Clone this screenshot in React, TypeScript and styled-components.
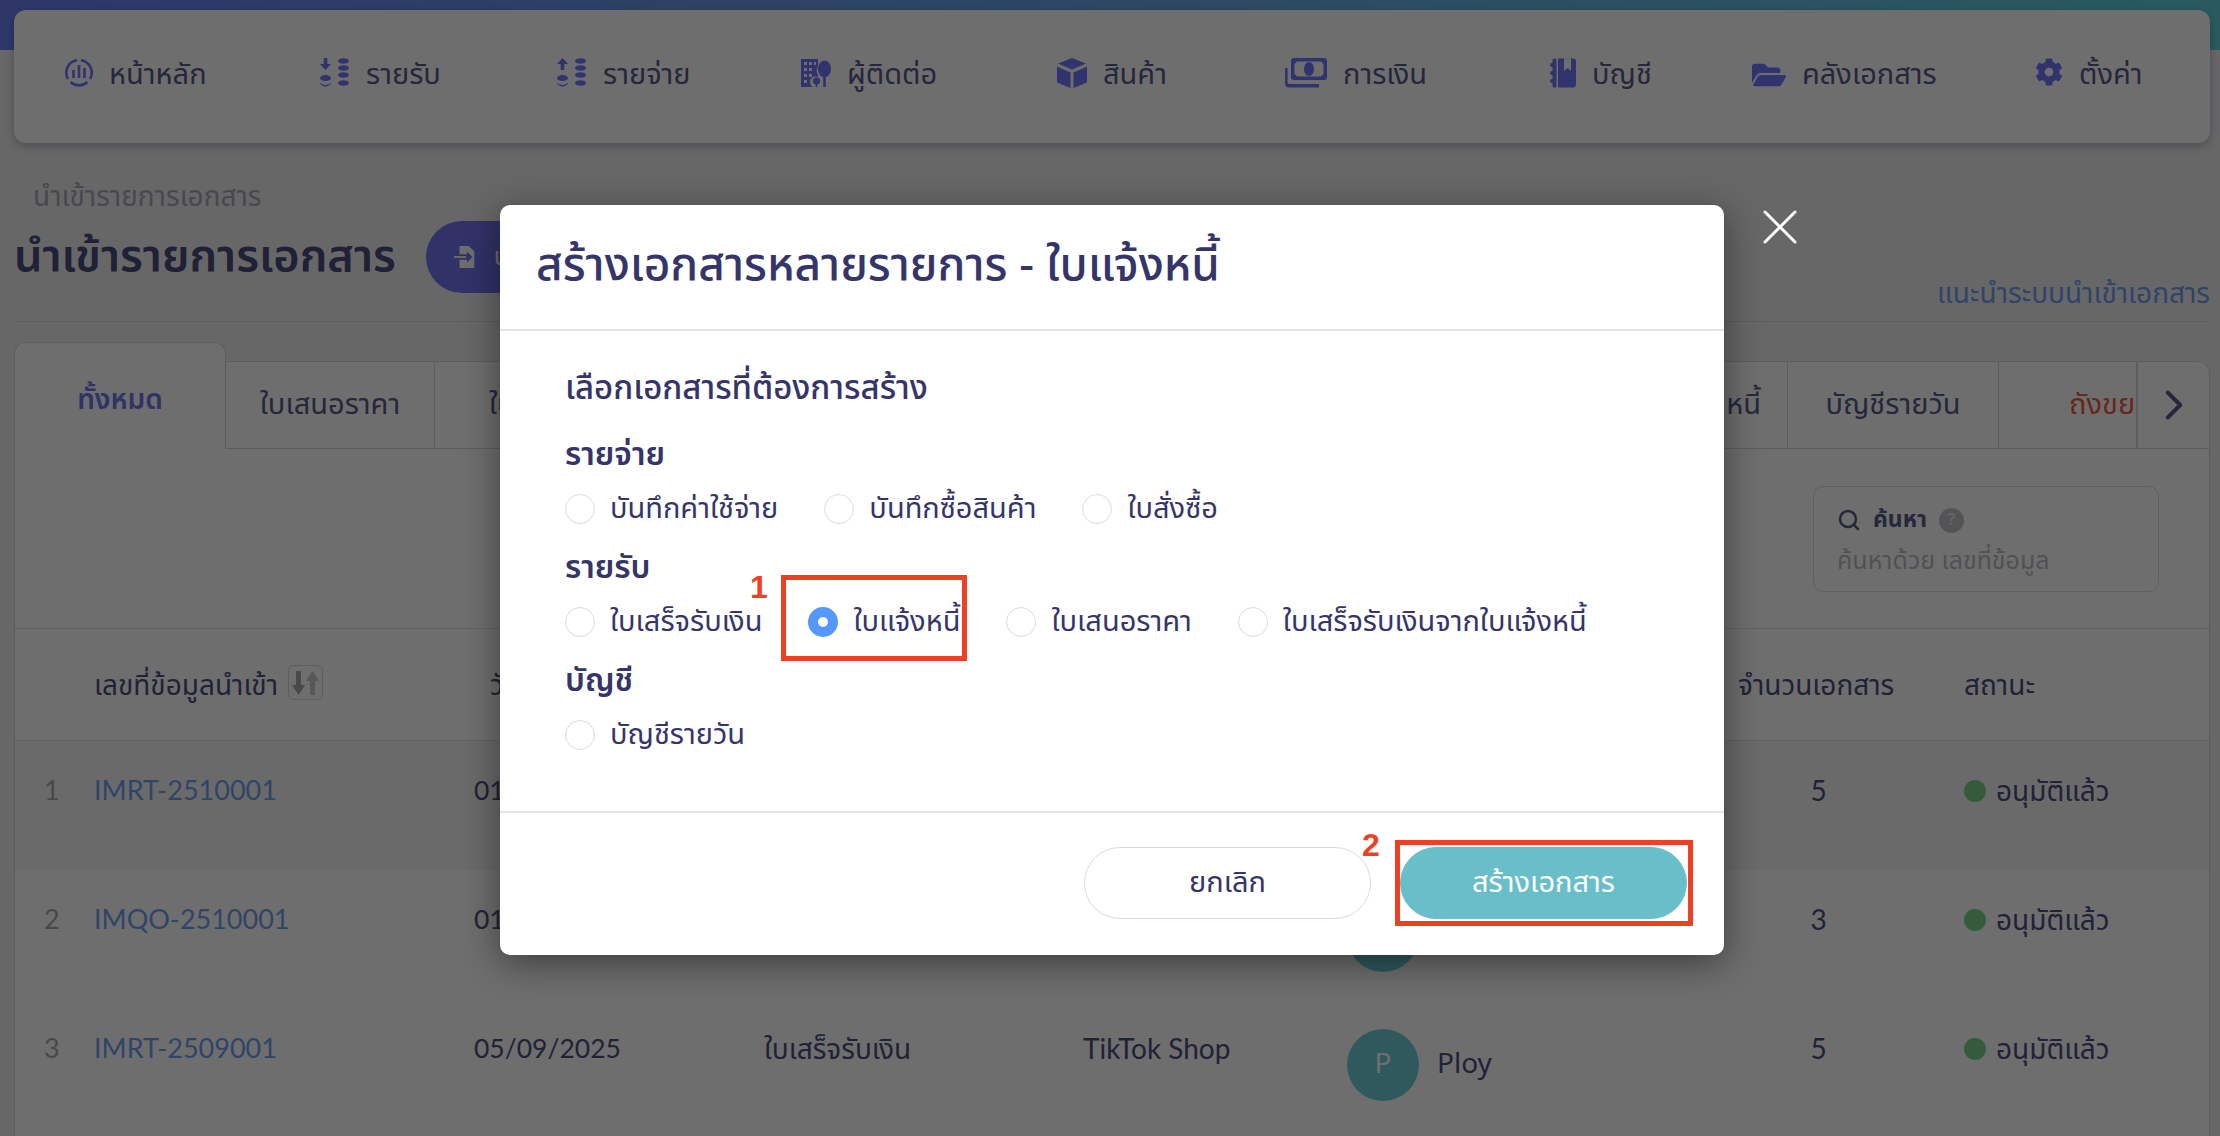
import styled, { createGlobalStyle } from "styled-components";
import { FaCog, FaFolderOpen } from "react-icons/fa";
import { ChevronRight, Search, X } from "lucide-react";

const GlobalStyle = createGlobalStyle`
    html, body {
        margin: 0;
        height: 100%;
        overflow: hidden;
    }
    body {
        font-family: "Noto Sans Thai", "Noto Sans Thai UI", "Noto Sans", Lato, sans-serif;
        color: #4a4a80;
    }
    * {
        box-sizing: border-box;
    }
`;

const Page = styled.div`
    position: relative;
    width: 2220px;
    height: 1136px;
    padding: 10px 10px 0 14px;
    overflow: hidden;
    background: linear-gradient(#eeeef2, #eeeef2) no-repeat 0 50px,
        linear-gradient(90deg, #6b80f2, #62d0dc) no-repeat 0 0 / 100% 50px;
`;
const NavBar = styled.nav`
    display: grid;
    grid-template-columns: 255px 237px 244px 256px 228px 265px 202px 283px 1fr;
    height: 133px;
    padding: 48px 0 0 51px;
    background: #fff;
    border-radius: 12px;
    box-shadow: 0 3px 8px rgba(0, 0, 0, 0.25);
`;
const NavItem = styled.div`
    display: flex;
    align-items: flex-start;
    gap: 16px;
    height: 30px;
    color: #5a5a8a;
    font-size: 29px;
    line-height: 34px;
    white-space: nowrap;
    svg {
        flex: none;
        color: #7277ff;
    }
`;
const Breadcrumb = styled.div`
    margin: 38px 0 0 19px;
    color: #a8a8b4;
    font-size: 28px;
    line-height: 34px;
`;
const TitleRow = styled.div`
    display: flex;
    align-items: flex-start;
    justify-content: space-between;
    height: 107px;
    padding-top: 6px;
    border-bottom: 1px solid #d8d8de;
`;
const TitleGroup = styled.div`
    display: flex;
    align-items: flex-start;
    gap: 30px;
`;
const PageTitle = styled.h1`
    margin: 0;
    color: #4a4a80;
    font-size: 45px;
    font-weight: 600;
    line-height: 72px;
`;
const ImportButton = styled.button`
    display: flex;
    align-items: center;
    gap: 16px;
    width: 300px;
    height: 72px;
    padding: 0 28px;
    border: none;
    border-radius: 36px;
    background: #7274f0;
    color: #fff;
    font: inherit;
    font-size: 25px;
`;
const GuideLink = styled.a`
    align-self: flex-end;
    padding-bottom: 6px;
    color: #6f9fee;
    font-size: 28px;
    line-height: 40px;
`;
const Tabs = styled.div`
    display: flex;
    align-items: flex-end;
    height: 107px;
    margin-top: 20px;
    border-bottom: 1px solid #d8d8de;
`;
const Tab = styled.div<{ $width?: number; $end?: boolean; $inset?: number; $danger?: boolean }>`
    display: flex;
    align-items: center;
    justify-content: ${(props) => (props.$end ? "flex-end" : props.$inset ? "flex-start" : "center")};
    flex: ${(props) => (props.$width ? `0 0 ${props.$width}px` : "1")};
    height: 88px;
    margin-bottom: -1px;
    padding: 0 ${(props) => (props.$inset ? 0 : 26)}px 0 ${(props) => props.$inset ?? 26}px;
    overflow: hidden;
    border: 1px solid #d8d8de;
    border-left: none;
    background: #fff;
    color: ${(props) => (props.$danger ? "#f05a3c" : "#5a5a8a")};
    font-size: 29px;
    white-space: nowrap;
`;
const ActiveTab = styled.div`
    display: flex;
    align-items: flex-start;
    justify-content: center;
    flex: 0 0 212px;
    height: 107px;
    margin-bottom: -1px;
    padding-top: 36px;
    border: 1px solid #d8d8de;
    border-bottom: 1px solid #fff;
    border-radius: 12px 12px 0 0;
    background: #fff;
    color: #7274f0;
    font-size: 28px;
    font-weight: 600;
`;
const ScrollTab = styled.div`
    display: flex;
    align-items: center;
    justify-content: center;
    flex: 0 0 73px;
    height: 88px;
    margin-bottom: -1px;
    border: 1px solid #d8d8de;
    border-radius: 0 12px 0 0;
    background: #fff;
    color: #5a5a8a;
`;
const Panel = styled.section`
    width: 2196px;
    height: 690px;
    border: 1px solid #d8d8de;
    border-top: none;
    background: #fff;
`;
const FilterBar = styled.div`
    display: flex;
    justify-content: flex-end;
    height: 180px;
    padding: 37px 50px 0 0;
    border-bottom: 1px solid #e4e4ea;
`;
const SearchBox = styled.div`
    width: 346px;
    height: 106px;
    padding: 15px 23px;
    border: 1px solid #dcdce2;
    border-radius: 10px;
`;
const SearchLabel = styled.div`
    display: flex;
    align-items: center;
    gap: 12px;
    color: #5a5a8a;
    font-size: 23px;
    font-weight: 700;
    line-height: 36px;
`;
const HelpDot = styled.span`
    display: flex;
    align-items: center;
    justify-content: center;
    width: 25px;
    height: 25px;
    border-radius: 50%;
    background: #c2c4ca;
    color: #e8e8ec;
    font-size: 16px;
`;
const Placeholder = styled.div`
    margin-top: 5px;
    color: #bcbcc4;
    font-size: 25px;
    line-height: 36px;
`;
const TableRow = styled.div<{ $head?: boolean; $shade?: boolean }>`
    display: grid;
    grid-template-columns: 79px 380px 290px 319px 264px 391px 226px 1fr;
    height: ${(props) => (props.$head ? 112 : 129)}px;
    padding-top: ${(props) => (props.$head ? 36 : 30)}px;
    border-bottom: ${(props) => (props.$head ? "1px solid #e4e4ea" : "none")};
    background: ${(props) => (props.$shade ? "#f6f6f8" : "#fff")};
    color: #4f4f7e;
    font-size: 28px;
    line-height: 38px;
    white-space: nowrap;
`;
const RowIndex = styled.div`
    padding-left: 29px;
    color: #a8a8ae;
    font-family: Lato, sans-serif;
    font-size: 27px;
`;
const IdLink = styled.div`
    color: #6f9fee;
    font-family: Lato, sans-serif;
    font-size: 27px;
`;
const Cell = styled.div<{ $center?: boolean; $indent?: number; $small?: boolean }>`
    display: flex;
    align-items: flex-start;
    gap: 10px;
    justify-content: ${(props) => (props.$center ? "center" : "flex-start")};
    width: ${(props) => (props.$center ? "161px" : "auto")};
    padding-left: ${(props) => props.$indent ?? 0}px;
    font-family: Lato, "Noto Sans Thai", "Noto Sans", sans-serif;
    font-size: ${(props) => (props.$small ? 26.5 : 28)}px;
`;
const SortButton = styled.span`
    display: flex;
    align-items: center;
    justify-content: center;
    width: 35px;
    height: 35px;
    border: 1px solid #d8d8de;
    border-radius: 6px;
`;
const UserCell = styled.div`
    display: flex;
    align-items: center;
    align-self: start;
    gap: 18px;
`;
const Avatar = styled.span`
    display: flex;
    align-items: center;
    justify-content: center;
    width: 72px;
    height: 72px;
    border-radius: 50%;
    background: #70ced8;
    color: #fff;
    font-size: 28px;
`;
const StatusDot = styled.span`
    flex: none;
    width: 22px;
    height: 22px;
    margin-top: 9px;
    border-radius: 50%;
    background: #78d68c;
`;
const Overlay = styled.div`
    position: absolute;
    inset: 0;
    background: rgba(0, 0, 0, 0.57);
`;
const Modal = styled.div`
    position: absolute;
    top: 205px;
    left: 500px;
    display: flex;
    flex-direction: column;
    width: 1224px;
    height: 750px;
    border-radius: 10px;
    background: #fff;
    box-shadow: 0 8px 36px rgba(0, 0, 0, 0.45);
    color: #35356a;
`;
const CloseButton = styled.div`
    position: absolute;
    top: 197px;
    left: 1750px;
    color: #fff;
`;
const ModalHeader = styled.header`
    flex: 0 0 126px;
    padding: 28px 36px 0;
    border-bottom: 2px solid #e4e4ec;
    font-size: 46px;
    font-weight: 500;
    line-height: 66px;
`;
const ModalBody = styled.div`
    flex: 1;
    padding: 30px 65px 0;
`;
const BodyTitle = styled.div`
    font-size: 33px;
    font-weight: 500;
    line-height: 56px;
`;
const GroupLabel = styled.div`
    margin-top: 16px;
    font-size: 32px;
    font-weight: 600;
    line-height: 44px;
`;
const RadioRow = styled.div`
    display: flex;
    align-items: center;
    gap: 46px;
    height: 54px;
    margin-top: 5px;
    margin-bottom: -6px;
`;
const RadioItem = styled.label`
    display: flex;
    align-items: center;
    gap: 15px;
    font-size: 29px;
    white-space: nowrap;
`;
const Radio = styled.span<{ $checked?: boolean }>`
    flex: none;
    width: 30px;
    height: 30px;
    border: ${(props) => (props.$checked ? "10px solid #5597fb" : "1px solid #dadae6")};
    border-radius: 50%;
    background: #fff;
`;
const ModalFooter = styled.footer`
    display: flex;
    justify-content: flex-end;
    gap: 29px;
    flex: 0 0 144px;
    padding: 34px 37px 0 0;
    border-top: 2px solid #e4e4ec;
`;
const FooterButton = styled.button<{ $primary?: boolean }>`
    width: 287px;
    height: 72px;
    border: 1px solid ${(props) => (props.$primary ? "#68bec9" : "#dadae6")};
    border-radius: 36px;
    background: ${(props) => (props.$primary ? "#68bec9" : "#fff")};
    color: ${(props) => (props.$primary ? "#fff" : "#35356a")};
    font: inherit;
    font-size: 29px;
`;
const Callout = styled.div<{ $left: number; $top: number; $width: number }>`
    position: absolute;
    top: ${(props) => props.$top}px;
    left: ${(props) => props.$left}px;
    width: ${(props) => props.$width}px;
    height: 86px;
    border: 5px solid #ef4023;
`;
const CalloutNumber = styled.div<{ $left: number; $top: number }>`
    position: absolute;
    top: ${(props) => props.$top}px;
    left: ${(props) => props.$left}px;
    color: #ef4023;
    font-family: "Liberation Sans", sans-serif;
    font-size: 32px;
    font-weight: 700;
    line-height: 36px;
`;

function HomeIcon() {
    return (
        <svg width="28" height="30" viewBox="0 0 28 30" fill="none" stroke="currentColor">
            <path d="M12 2.3A12.5 12.5 0 0 0 3 21" strokeWidth="2.6" />
            <path d="M16 2.3A12.5 12.5 0 0 1 25 21" strokeWidth="2.6" />
            <path d="M5.5 24A12.5 12.5 0 0 0 22.5 24" strokeWidth="2.6" />
            <path d="M8.5 12v8M14 7v13M19.5 10v10" strokeWidth="2.6" />
        </svg>
    );
}

// down = รายรับ, up = รายจ่าย
function CoinsIcon({ up }: { up?: boolean }) {
    const stack = [3, 10, 17, 25];
    return (
        <svg width="30" height="30" viewBox="0 0 30 30" fill="currentColor">
            {up
                ? <path d="M5.5 0L11 6H7.3V12H3.7V6H0Z" />
                : <path d="M3.7 0H7.3V6H11L5.5 12L0 6H3.7Z" />}
            <ellipse cx="5.5" cy="20" rx="5.5" ry="3" />
            <path d="M0 25Q5.5 29 11 25V26Q5.5 31 0 26Z" />
            {stack.map((y) => (
                <ellipse key={y} cx="23.5" cy={y} rx="5.5" ry="2.8" />
            ))}
        </svg>
    );
}

function ContactIcon() {
    return (
        <svg width="30" height="30" viewBox="0 0 30 30" fill="currentColor">
            <path d="M0 1H17V8A9 9 0 0 0 17 17V19A5 5 0 0 0 12 29H0Z" />
            <g fill="#fff">
                <rect x="3" y="4" width="3" height="3" />
                <rect x="8" y="4" width="3" height="3" />
                <rect x="13" y="4" width="2" height="3" />
                <rect x="3" y="10" width="3" height="3" />
                <rect x="8" y="10" width="3" height="3" />
                <rect x="3" y="16" width="3" height="3" />
                <rect x="8" y="16" width="3" height="3" />
                <rect x="3" y="22" width="3" height="3" />
            </g>
            <ellipse cx="23.5" cy="11" rx="6.5" ry="8.5" />
            <rect x="22.2" y="16" width="2.6" height="13" />
            <circle cx="15.5" cy="23" r="3.6" />
            <rect x="14.6" y="24" width="1.8" height="5" />
        </svg>
    );
}

function CubeIcon() {
    return (
        <svg width="30" height="30" viewBox="0 0 30 30" fill="currentColor">
            <path d="M15 0L29 5.5L15 11.5L1 5.5Z" />
            <path d="M0 8.5L13.5 14.5V30L0 24.5Z" />
            <path d="M30 8.5L16.5 14.5V30L30 24.5Z" />
        </svg>
    );
}

function MoneyIcon() {
    return (
        <svg width="42" height="30" viewBox="0 0 42 30" fill="currentColor">
            <path fillRule="evenodd" d="M9 0H39A3 3 0 0 1 42 3V19A3 3 0 0 1 39 22H9A3 3 0 0 1 6 19V3A3 3 0 0 1 9 0ZM12 3.5L9.5 6V16L12 18.5H36L38.5 16V6L36 3.5Z" />
            <ellipse cx="24" cy="11" rx="5" ry="7" />
            <path d="M0 10H2.6V24A2 2 0 0 0 4.6 26H34V29.5H4A4 4 0 0 1 0 25.5Z" />
        </svg>
    );
}

function BookIcon() {
    return (
        <svg width="26" height="30" viewBox="0 0 26 30" fill="currentColor">
            <path d="M8 0.5H23A3 3 0 0 1 26 3.5V26.5A3 3 0 0 1 23 29.5H8Z" />
            <rect x="2.5" y="0.5" width="4" height="29" rx="1.5" />
            <rect x="0" y="5" width="6" height="4" rx="2" />
            <rect x="0" y="13" width="6" height="4" rx="2" />
            <rect x="0" y="21" width="6" height="4" rx="2" />
            <path d="M14 0.5H21V13L17.5 10L14 13Z" fill="#fff" />
        </svg>
    );
}

function SortIcon() {
    return (
        <svg width="27" height="24" viewBox="0 0 27 24" fill="#aaa">
            <path d="M4 0H9V14H13L6.5 24L0 14H4Z" />
            <path d="M20.5 0L27 10H23V24H18V10H14Z" fill="#c9c9c9" />
        </svg>
    );
}

function ImportIcon() {
    return (
        <svg width="24" height="24" viewBox="0 0 26 24" fill="#fff">
            <path d="M6 0H16L22 6V24H6V15H14V18L20 12L14 6V9H6Z" />
            <path d="M0 11H13V13H0Z" />
        </svg>
    );
}

const NAV_ITEMS = [
    { label: "หน้าหลัก", icon: <HomeIcon /> },
    { label: "รายรับ", icon: <CoinsIcon /> },
    { label: "รายจ่าย", icon: <CoinsIcon up /> },
    { label: "ผู้ติดต่อ", icon: <ContactIcon /> },
    { label: "สินค้า", icon: <CubeIcon /> },
    { label: "การเงิน", icon: <MoneyIcon /> },
    { label: "บัญชี", icon: <BookIcon /> },
    { label: "คลังเอกสาร", icon: <FaFolderOpen size={34} /> },
    { label: "ตั้งค่า", icon: <FaCog size={28} /> },
];

// แถวที่ 1-2 ถูก modal บังอยู่ เลยไม่ใส่ข้อความคอลัมน์กลาง
const ROWS = [
    { id: "IMRT-2510001", date: "01/10/2025", type: "", channel: "", user: "", count: 5 },
    { id: "IMQO-2510001", date: "01/10/2025", type: "", channel: "", user: "P", count: 3 },
    { id: "IMRT-2509001", date: "05/09/2025", type: "ใบเสร็จรับเงิน", channel: "TikTok Shop", user: "P", count: 5 },
];

const RADIO_GROUPS = [
    { label: "รายจ่าย", items: ["บันทึกค่าใช้จ่าย", "บันทึกซื้อสินค้า", "ใบสั่งซื้อ"] },
    { label: "รายรับ", items: ["ใบเสร็จรับเงิน", "ใบแจ้งหนี้", "ใบเสนอราคา", "ใบเสร็จรับเงินจากใบแจ้งหนี้"] },
    { label: "บัญชี", items: ["บัญชีรายวัน"] },
];

function App() {
    return (
        <Page>
            <GlobalStyle />
            <NavBar>
                {NAV_ITEMS.map((item) => (
                    <NavItem key={item.label}>
                        {item.icon}
                        {item.label}
                    </NavItem>
                ))}
            </NavBar>
            <Breadcrumb>นำเข้ารายการเอกสาร</Breadcrumb>
            <TitleRow>
                <TitleGroup>
                    <PageTitle>นำเข้ารายการเอกสาร</PageTitle>
                    <ImportButton><ImportIcon />นำ</ImportButton>
                </TitleGroup>
                <GuideLink>แนะนำระบบนำเข้าเอกสาร</GuideLink>
            </TitleRow>
            <Tabs>
                <ActiveTab>ทั้งหมด</ActiveTab>
                <Tab $width={209}>ใบเสนอราคา</Tab>
                <Tab $width={365} $inset={54}>ใบ</Tab>
                <Tab $end>หนี้</Tab>
                <Tab $width={211}>บัญชีรายวัน</Tab>
                <Tab $width={138} $inset={70} $danger>ถังขยะ</Tab>
                <ScrollTab><ChevronRight size={50} strokeWidth={1.9} /></ScrollTab>
            </Tabs>
            <Panel>
                <FilterBar>
                    <SearchBox>
                        <SearchLabel>
                            <Search size={24} strokeWidth={2.5} />
                            ค้นหา
                            <HelpDot>?</HelpDot>
                        </SearchLabel>
                        <Placeholder>ค้นหาด้วย เลขที่ข้อมูล</Placeholder>
                    </SearchBox>
                </FilterBar>
                <TableRow $head>
                    <div />
                    <Cell>เลขที่ข้อมูลนำเข้า<SortButton><SortIcon /></SortButton></Cell>
                    <Cell $indent={16}>วั</Cell>
                    <div />
                    <div />
                    <div />
                    <Cell>จำนวนเอกสาร</Cell>
                    <Cell>สถานะ</Cell>
                </TableRow>
                {ROWS.map((row, index) => (
                    <TableRow key={row.id} $shade={index === 0}>
                        <RowIndex>{index + 1}</RowIndex>
                        <IdLink>{row.id}</IdLink>
                        <Cell $small>{row.date}</Cell>
                        <Cell>{row.type}</Cell>
                        <Cell>{row.channel}</Cell>
                        <UserCell>
                            {row.user && <Avatar>{row.user}</Avatar>}
                            {index === 2 && "Ploy"}
                        </UserCell>
                        <Cell $center>{row.count}</Cell>
                        <Cell><StatusDot />อนุมัติแล้ว</Cell>
                    </TableRow>
                ))}
            </Panel>
            <Overlay />
            <Modal>
                <ModalHeader>สร้างเอกสารหลายรายการ - ใบแจ้งหนี้</ModalHeader>
                <ModalBody>
                    <BodyTitle>เลือกเอกสารที่ต้องการสร้าง</BodyTitle>
                    {RADIO_GROUPS.map((group) => (
                        <div key={group.label}>
                            <GroupLabel>{group.label}</GroupLabel>
                            <RadioRow>
                                {group.items.map((item) => (
                                    <RadioItem key={item}>
                                        <Radio $checked={item === "ใบแจ้งหนี้"} />
                                        {item}
                                    </RadioItem>
                                ))}
                            </RadioRow>
                        </div>
                    ))}
                </ModalBody>
                <ModalFooter>
                    <FooterButton>ยกเลิก</FooterButton>
                    <FooterButton $primary>สร้างเอกสาร</FooterButton>
                </ModalFooter>
                <CalloutNumber $left={250} $top={364}>1</CalloutNumber>
                <Callout $left={281} $top={370} $width={186} />
                <CalloutNumber $left={862} $top={622}>2</CalloutNumber>
                <Callout $left={895} $top={635} $width={298} />
            </Modal>
            <CloseButton><X size={60} strokeWidth={1.2} /></CloseButton>
        </Page>
    );
}

export default App;
